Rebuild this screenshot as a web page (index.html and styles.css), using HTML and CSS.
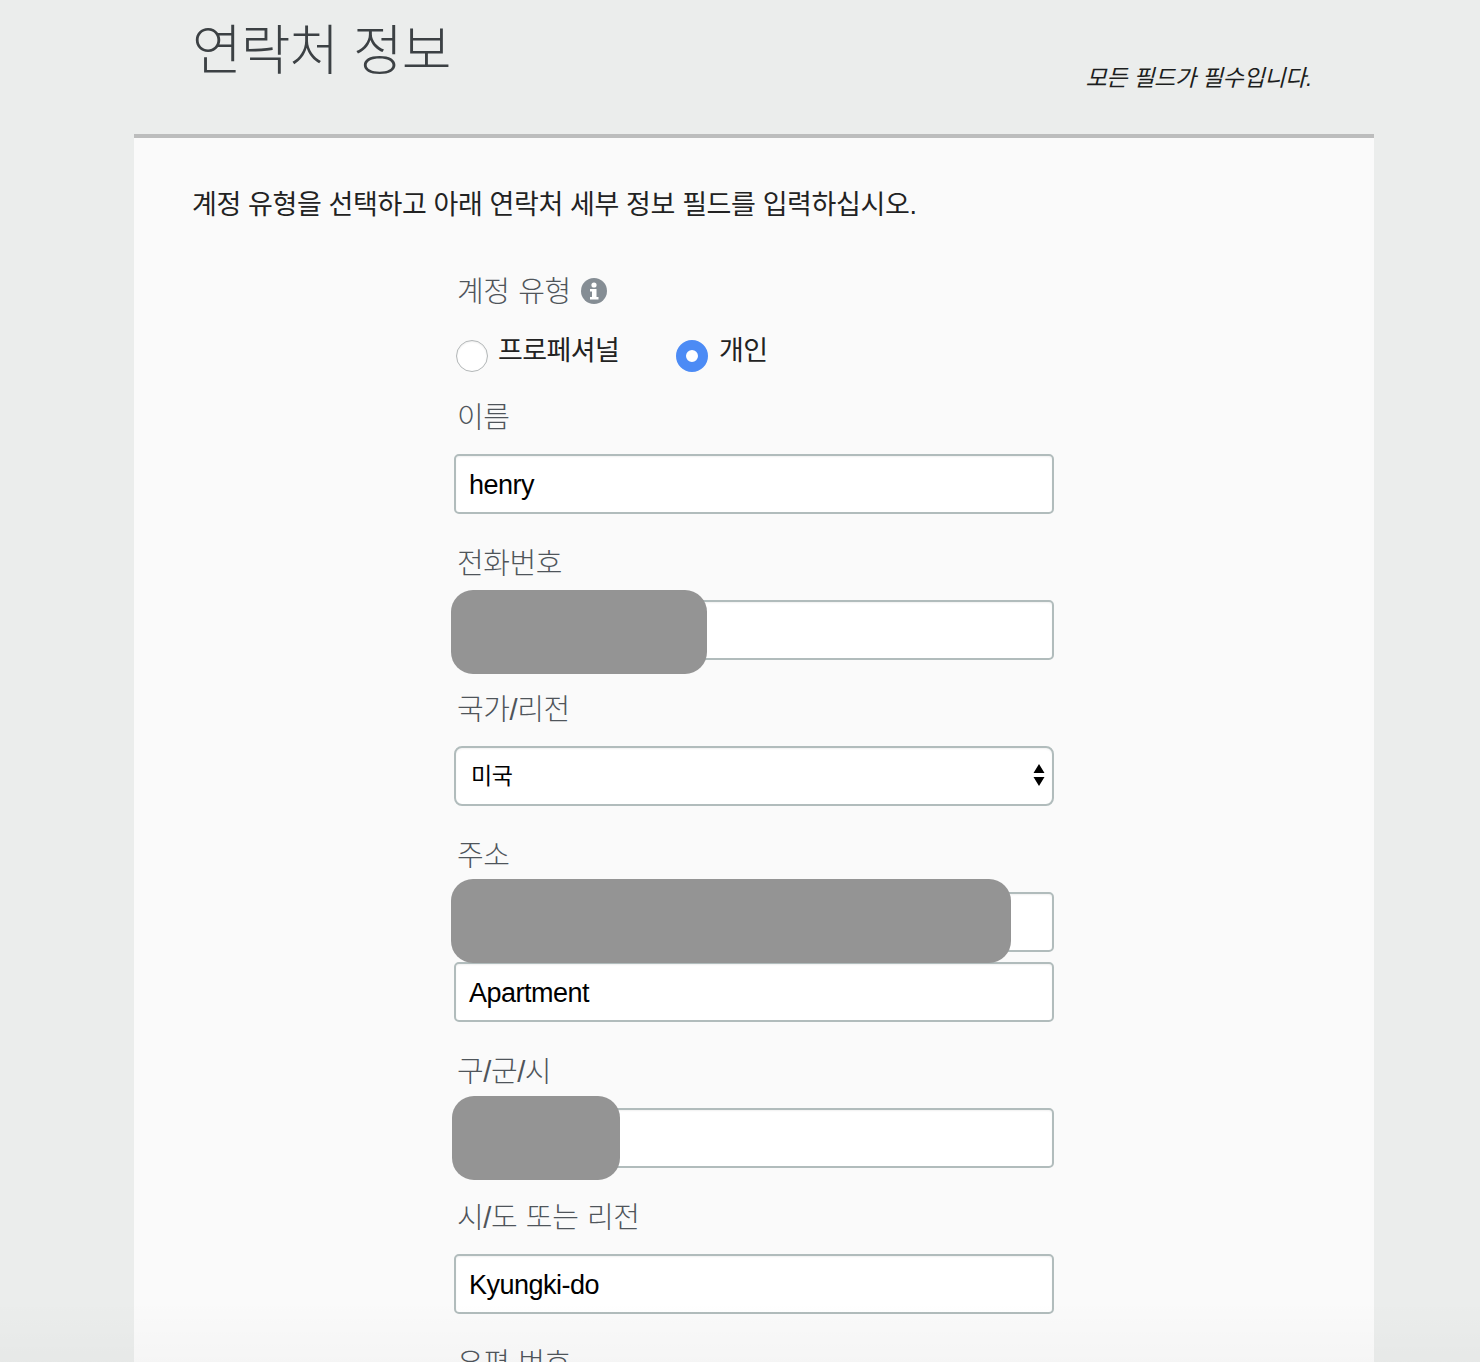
FILE: index.html
```html
<!DOCTYPE html>
<html lang="ko">
<head>
<meta charset="utf-8">
<title>연락처 정보</title>
<link rel="stylesheet" href="styles.css">
</head>
<body>
<div class="page">
  <header class="head">
    <h1 class="title">연락처 정보</h1>
    <p class="required">모든 필드가 필수입니다.</p>
  </header>
  <main class="card">
    <p class="intro">계정 유형을 선택하고 아래 연락처 세부 정보 필드를 입력하십시오.</p>
    <form class="form">
      <div class="type-label"><span class="label">계정 유형</span>
        <svg class="info" viewBox="0 0 26 26" width="26" height="26"><circle cx="13" cy="13" r="13" fill="#858d94"/><circle cx="13" cy="7" r="2.6" fill="#fff"/><path d="M9 11h6.500v8h2v2.500H9V19h2v-5.500H9z" fill="#fff"/></svg>
      </div>
      <div class="radios">
        <span class="radio-item pro"><span class="radio"></span><span class="radio-text">프로페셔널</span></span>
        <span class="radio-item"><span class="radio on"></span><span class="radio-text">개인</span></span>
      </div>
      <div class="label name-label">이름</div>
      <div class="input">henry</div>
      <div class="label l2">전화번호</div>
      <div class="input"><span class="mask phone"></span></div>
      <div class="label l3">국가/리전</div>
      <div class="input select">미국<svg class="arrows" viewBox="0 0 12 24" width="12" height="24"><path d="M6 1l5.500 9H.5zM6 23L.5 14h11z" fill="#000"/></svg></div>
      <div class="label l2">주소</div>
      <div class="input"><span class="mask addr"></span></div>
      <div class="input apt">Apartment</div>
      <div class="label l2">구/군/시</div>
      <div class="input"><span class="mask city"></span></div>
      <div class="label l3">시/도 또는 리전</div>
      <div class="input">Kyungki-do</div>
      <div class="label l2">우편 번호</div>
    </form>
  </main>
  <div class="fade"></div>
</div>
</body>
</html>
```
FILE: styles.css
```css
* { box-sizing: border-box; }
html, body { margin: 0; height: 1362px; overflow: hidden; }
body { background: #ebedec; font-family: "Liberation Sans", "Noto Sans CJK KR", sans-serif; }
.page { width: 1240px; height: 1362px; margin-left: 134px; overflow: hidden; }
.head { height: 134px; display: flex; justify-content: space-between; padding-left: 58px; padding-right: 62px; }
.title { margin: 19px 0 0; font-size: 54px; line-height: 64px; font-weight: 300; color: #3c4144; font-family: "Liberation Sans", "Noto Sans CJK KR", sans-serif; letter-spacing: -1px; word-spacing: 1px; }
.required { margin: 62px 0 0; font-size: 23px; line-height: 32px; font-style: italic; color: #1c1e20; letter-spacing: -0.33px; }
.card { background: #fafafa; border-top: 4px solid #bcbdbd; height: 1228px; padding: 51px 58px 0; overflow: hidden; }
.intro { margin: 0; font-size: 27px; line-height: 32px; color: #222; letter-spacing: -0.38px; }
.form { margin: 54px 0 0 262px; width: 600px; }
.label { font-size: 29px; line-height: 34px; color: #4f555a; font-weight: 300; margin-left: 3px; letter-spacing: -0.4px; word-spacing: 1px; }
.type-label { display: flex; align-items: center; gap: 10px; height: 34px; }
.info { display: block; margin-top: -2px; }
.radios { display: flex; margin-top: 27px; height: 37px; }
.radio-item { display: flex; }
.pro { width: 222px; }
.radio { width: 32px; height: 32px; margin: 4px 10px 0 2px; border-radius: 50%; background: #fff; border: 1px solid #b3b7b8; display: block; box-shadow: inset 0 1px 2px rgba(0, 0, 0, 0.08); }
.radio.on { border: 10px solid #4c8bf5; margin-left: 0; margin-right: 11px; box-shadow: none; }
.radio-text { font-size: 27px; line-height: 30px; color: #222; letter-spacing: -0.6px; margin-top: 0; }
.name-label { margin-top: 28px; }
.input { position: relative; height: 60px; margin-top: 19px; padding-left: 13px; background: #fff; border: 2px solid #b1bcbc; border-radius: 5px; box-shadow: inset 0 1px 2px rgba(0, 0, 0, 0.06); font-size: 27px; line-height: 58px; color: #000; letter-spacing: -0.5px; }
.l2, .l3 { margin-top: 33px; }
.select { padding-left: 15px; font-size: 23px; line-height: 56px; border-radius: 8px; }
.arrows { position: absolute; right: 7px; top: 15px; }
.apt { margin-top: 10px; }
.mask { position: absolute; z-index: 1; left: -5px; top: -12px; height: 84px; background: #949494; border-radius: 22px; }
.phone { width: 256px; }
.addr { width: 560px; top: -15px; }
.city { width: 168px; left: -4px; top: -14px; }
.fade { position: absolute; left: 0; right: 0; top: 1300px; height: 62px; background: linear-gradient(rgba(0, 0, 0, 0), rgba(0, 0, 0, 0.02)); pointer-events: none; }
```
